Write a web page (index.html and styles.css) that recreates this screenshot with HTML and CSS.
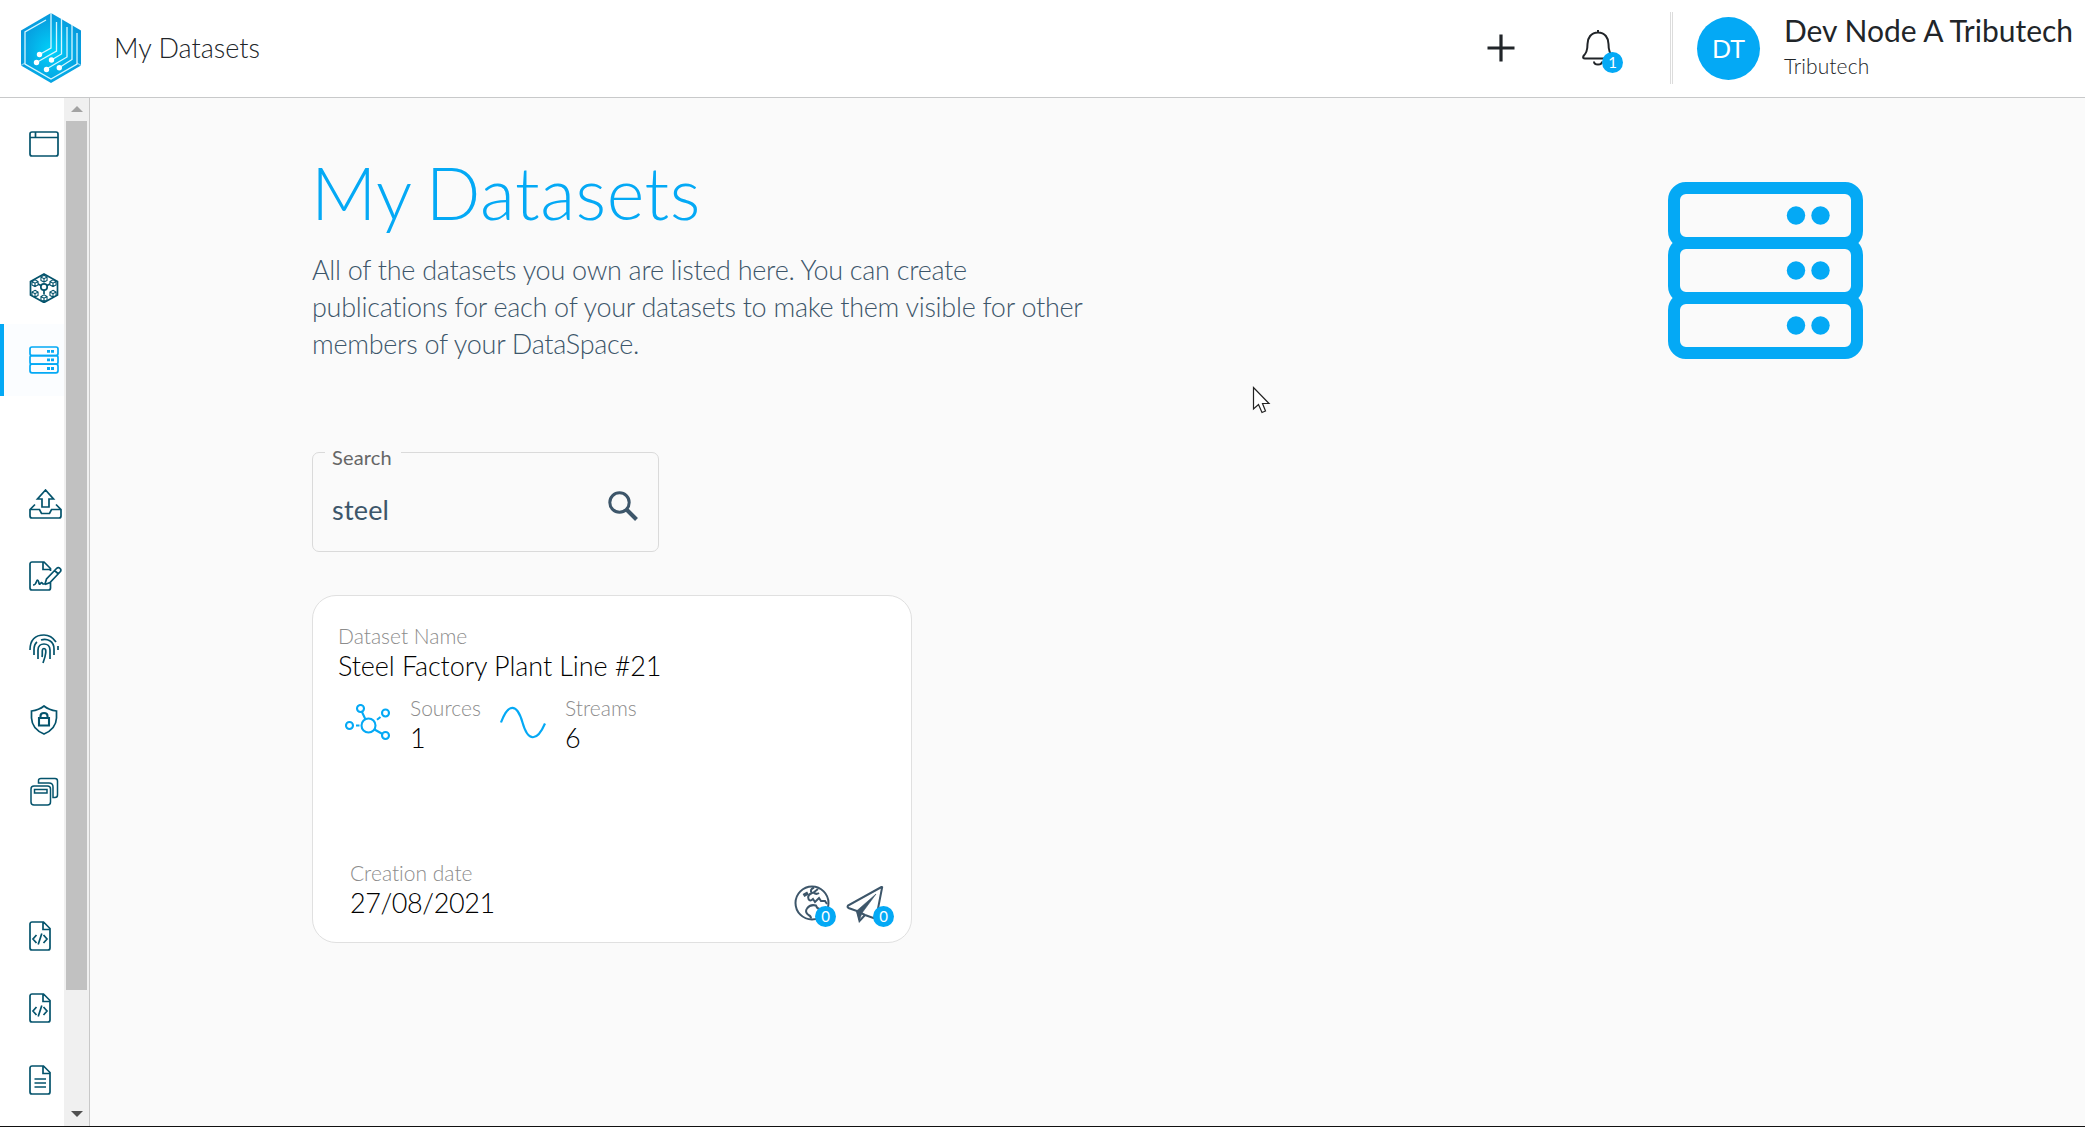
FILE: index.html
```html
<!DOCTYPE html>
<html lang="en">
<head>
<meta charset="utf-8">
<title>My Datasets</title>
<link rel="stylesheet" href="styles.css">
</head>
<body>
<svg class="defs" width="0" height="0">
  <defs>
    <radialGradient id="logoFill" cx="50%" cy="55%" r="58%">
      <stop offset="0" stop-color="#00d2fa"/><stop offset="1" stop-color="#0894da"/>
    </radialGradient>
    <symbol id="servers" viewBox="0 0 195 177">
      <g fill="none" stroke="currentColor" stroke-width="12"><rect x="6" y="6" width="183" height="55" rx="12"/><rect x="6" y="61" width="183" height="55" rx="12"/><rect x="6" y="116" width="183" height="55" rx="12"/></g>
      <g fill="currentColor"><circle cx="128" cy="33.500" r="9.200"/><circle cx="152.500" cy="33.500" r="9.200"/><circle cx="128" cy="88.500" r="9.200"/><circle cx="152.500" cy="88.500" r="9.200"/><circle cx="128" cy="143.500" r="9.200"/><circle cx="152.500" cy="143.500" r="9.200"/></g>
    </symbol>
    <symbol id="cube" viewBox="-5 -5 10 10"><path d="M0-3.600L3.400-1.700V2.200L0 4L-3.400 2.200V-1.700ZM-3.400-1.700L0 .2L3.400-1.700M0 .2V4" fill="#fff" stroke="currentColor" stroke-width="1.200"/></symbol>
    <symbol id="codefile" viewBox="0 0 22 30"><path d="M3 1H14.500L21 7.500V27a2 2 0 0 1-2 2H3a2 2 0 0 1-2-2V3a2 2 0 0 1 2-2ZM14 1V8.500H21M7.500 14L4 18L7.500 22M14.500 14L18 18L14.500 22M12.800 12.500L9.200 23.500" fill="none" stroke="currentColor" stroke-width="1.700"/></symbol>
  </defs>
</svg>
<header class="topbar">
  <svg class="logo" width="60" height="70" viewBox="0 0 60 70">
    <path d="M30 0L60 17.500V52.500L30 70L0 52.500V17.500Z" fill="url(#logoFill)"/>
    <g fill="none" stroke="#d5f6ff" stroke-width="1.300">
      <path d="M25 7L4 19V51L30 66L56 51V20"/>
      <path d="M0 52.500L4 50M60 52.500L56 50" stroke-opacity=".6"/>
      <path d="M30 0V35L18.500 41.500M35.500 9V38L15.500 49.500M40.500 6V41L30.500 47M46 14V44L25.500 56M51 12V46.500L38.500 54.500"/>
    </g>
    <g fill="#fff"><circle cx="18.500" cy="41.500" r="2.700"/><circle cx="15.500" cy="49.500" r="2.700"/><circle cx="30.500" cy="47" r="2.700"/><circle cx="25.500" cy="56.500" r="2.700"/><circle cx="38.300" cy="54.700" r="2.700"/></g>
  </svg>
  <span class="page-name">My Datasets</span>
  <svg class="plus" width="28" height="28" viewBox="0 0 28 28"><path d="M14 .5V27.500M.5 14H27.500" stroke="#212529" stroke-width="3.200"/></svg>
  <div class="bell">
    <svg width="32" height="38" viewBox="0 0 32 38"><path d="M16 1V4M16 3.500C9 3.500 5.500 9 5.500 15C5.500 22 4 24 1.500 27Q.3 29.500 3 29.500H29Q31.700 29.500 30.500 27C28 24 26.500 22 26.500 15C26.500 9 23 3.500 16 3.500ZM12 32.500Q12 35.500 16 35.500Q20 35.500 20 32.500" fill="none" stroke="#212529" stroke-width="2"/></svg>
    <span class="badge">1</span>
  </div>
  <div class="user">
    <div class="avatar">DT</div>
    <div class="who"><div class="user-name">Dev Node A Tributech</div><div class="org">Tributech</div></div>
  </div>
</header>
<div class="body">
  <nav class="rail">
    <div class="items">
      <a class="item"><svg width="30" height="26" viewBox="0 0 30 26"><rect x="1" y="1" width="28" height="24" rx="2" /><path d="M1 6.500H29M6.500 1V6.500"/></svg></a>
      <div class="item"></div>
      <a class="item"><svg width="30" height="30" viewBox="0 0 30 30"><path d="M15 1L28.500 8.500V22L15 29.500L1.500 22V8.500ZM15 17V21M12 12.500L8 10.500M18 12.500L22 10.500"/><circle cx="15" cy="14" r="3.200"/><use href="#cube" x="10.500" y="1" width="9" height="9"/><use href="#cube" x="1.500" y="5.500" width="9" height="9"/><use href="#cube" x="19.500" y="5.500" width="9" height="9"/><use href="#cube" x="1.500" y="16" width="9" height="9"/><use href="#cube" x="19.500" y="16" width="9" height="9"/><use href="#cube" x="10.500" y="20.500" width="9" height="9"/></svg></a>
      <a class="item active"><svg class="rack" width="30" height="28" viewBox="0 0 30 28"><rect x="1" y="1" width="28" height="8.600" rx="2"/><rect x="1" y="9.600" width="28" height="8.600" rx="2"/><rect x="1" y="18.200" width="28" height="8.600" rx="2"/><path d="M18 5.300H21M22 5.300H25M18 13.900H21M22 13.900H25M18 22.500H21M22 22.500H25" stroke-width="2.800"/></svg></a>
      <div class="item"></div>
      <a class="item"><svg width="33" height="30" viewBox="0 0 33 30"><path d="M6 15.500L1 20.500V27a2 2 0 0 0 2 2H30a2 2 0 0 0 2-2V20.500L27 15.500M1 20.500H10.500L12.500 24.500H20.500L22.500 20.500H32M16.500 1L8.500 10H13V18H20V10H24.500Z"/></svg></a>
      <a class="item"><svg width="33" height="30" viewBox="0 0 33 30"><path d="M21.500 10V7.500L15 1H3a2 2 0 0 0-2 2V27a2 2 0 0 0 2 2H19.500a2 2 0 0 0 2-2V21M14 1V8.500H21.500M4 24C8 24 7 19 8.500 19S9.500 24 11 23S12 20.500 14 23H16L17.500 18L27.500 7.500Q29.500 5.500 31.500 8Q32.500 9.500 31 11L21 21.500L16 23.500M25.500 9.500L29.500 13"/></svg></a>
      <a class="item"><svg width="30" height="31" viewBox="0 0 30 31"><path d="M1 17C1 7 6 2 15 2C20 2 24 4.500 27 9M29 13V17M5 22V17C5 12 6 10.500 8 9M12 7C18 5 25 8 25 16V22M9 26V17C9 9 21 9 21 17V26M13 24C14 21 12 15.500 15 15.500S17 22 14 30"/></svg></a>
      <a class="item"><svg class="shield" width="28" height="30" viewBox="0 0 28 30"><path d="M14 1Q19 5 26.500 6V13Q26 24 14 29Q2 24 1.500 13V6Q9 5 14 1Z"/><path d="M9 13H19V20.500H9ZM10.500 13V11Q10.500 8 14 8T17.500 11V13" stroke-width="2.100"/></svg></a>
      <a class="item"><svg class="stack" width="30" height="30" viewBox="0 0 30 30"><rect x="2" y="9" width="19.500" height="19" rx="3"/><path d="M5.500 12.500H18V16H5.500ZM9.500 6V3.500Q9.500 1.500 12 1.500H26Q28.500 1.500 28.500 4V18Q28.500 20.500 26 20.500H24V10Q24 6 20 6Z"/></svg></a>
      <div class="item"></div>
      <a class="item"><svg width="22" height="30"><use href="#codefile"/></svg></a>
      <a class="item"><svg width="22" height="30"><use href="#codefile"/></svg></a>
      <a class="item"><svg width="22" height="30" viewBox="0 0 22 30"><path d="M3 1H14.500L21 7.500V27a2 2 0 0 1-2 2H3a2 2 0 0 1-2-2V3a2 2 0 0 1 2-2ZM14 1V8.500H21M5.500 14H17M5.500 18H17M5.500 22H17"/></svg></a>
    </div>
    <div class="scrollbar">
      <svg width="12" height="6" viewBox="0 0 12 6"><path d="M6 0L12 6H0Z" fill="#a3a3a3"/></svg>
      <div class="thumb"></div>
      <svg class="down" width="12" height="6" viewBox="0 0 12 6"><path d="M0 0H12L6 6Z" fill="#505050"/></svg>
    </div>
  </nav>
  <main class="content">
    <section class="intro">
      <div>
        <h1>My Datasets</h1>
        <p>All of the datasets you own are listed here. You can create publications for each of your datasets to make them visible for other members of your DataSpace.</p>
      </div>
      <svg class="hero" width="195" height="177"><use href="#servers"/></svg>
    </section>
    <fieldset class="search">
      <legend>Search</legend>
      <span class="query">steel</span>
      <svg width="31" height="31" viewBox="0 0 31 31" fill="none" stroke="#3d566a"><circle cx="11.500" cy="11.500" r="9.700" stroke-width="3"/><path d="M18.500 18.500L28.500 28.500" stroke-width="4"/></svg>
    </fieldset>
    <article class="card">
      <div class="label">Dataset Name</div>
      <div class="value">Steel Factory Plant Line #21</div>
      <div class="stats">
        <svg width="46" height="37" viewBox="0 0 46 37" fill="none" stroke="#04a9f5" stroke-width="2.100"><circle cx="23.500" cy="21.500" r="7"/><circle cx="15.500" cy="4.500" r="3.500"/><circle cx="40.500" cy="9" r="3.500"/><circle cx="4.500" cy="21.500" r="3.500"/><circle cx="40.500" cy="31.500" r="3.500"/><path d="M17 8L20.500 15.500M29.500 25.500L37.500 30M11 21.500H14.500M32 15.800L35.500 13"/></svg>
        <div class="stat"><div class="label">Sources</div><div class="value">1</div></div>
        <svg class="wave" width="46" height="34" viewBox="0 0 46 34"><path d="M1 16.500C8-3 17-3 22.500 16.500S37 36 45 17.500" fill="none" stroke="#04a9f5" stroke-width="2.200"/></svg>
        <div class="stat"><div class="label">Streams</div><div class="value">6</div></div>
      </div>
      <footer>
        <div class="created"><div class="label">Creation date</div><div class="value date">27/08/2021</div></div>
        <div class="action globe">
          <svg width="36" height="36" viewBox="0 0 36 36"><circle cx="18" cy="18" r="16.500"/><path d="M20 2.500Q15 5 18 8Q13 10 14.500 14Q16 17 19 14L21 17L25 13L27 16H31L33 19M24 4L19.500 7.500Q22 10 25 8M17 33.500Q17 31 14.500 30Q10.500 27 13 23.500Q16 19 22 20.500Q23 24 26 24"/><path d="M9.500 10.500L14 8" stroke-width="3.500"/></svg>
          <span class="badge">0</span>
        </div>
        <div class="action plane">
          <svg width="38" height="38" viewBox="0 0 38 38"><path d="M35.500 2L2 20.500Q1 22 2.500 23L11 26L13.500 36L19 30L30 34L36 3Q36.500 1.500 35.500 2ZM15 28L19 30"/><path d="M10.500 26L30 9L16 28L13.500 35Z" fill="#3d566a" stroke-width=".6"/></svg>
          <span class="badge">0</span>
        </div>
      </footer>
    </article>
  </main>
</div>
<svg class="pointer" width="20" height="30" viewBox="0 0 20 30"><path d="M1.500 1.500V23L6.500 18.500L10 26.500L13.500 25L10.500 17.500H17Z" fill="#fff" stroke="#222" stroke-width="1.200"/></svg>
</body>
</html>
```
FILE: styles.css
```css
* { box-sizing: border-box; }
body { margin: 0; width: 2085px; height: 1127px; overflow: hidden; display: flex; flex-direction: column; background: #fafafa; font-family: Lato, sans-serif; font-variant-ligatures: none; color: #212529; border-bottom: 1px solid #111; position: relative; }
svg { display: block; flex: none; }
.defs { position: absolute; }
.topbar { height: 98px; flex: none; display: flex; align-items: center; background: #fff; border-bottom: 1px solid #c8c9ca; padding: 0 0 1px 21px; }
.page-name { font-size: 27px; font-weight: 300; margin: 0 0 2px 33px; white-space: nowrap; }
.plus { margin-left: auto; }
.bell { position: relative; margin-left: 67px; width: 88px; }
.badge { position: absolute; width: 21px; height: 21px; border-radius: 50%; background: #04a9f5; color: #fff; font-size: 15px; line-height: 21px; text-align: center; }
.bell .badge { left: 20px; top: 23px; }
.user { display: flex; align-items: center; width: 415px; height: 72px; border-left: 3px double #dcdcdc; padding-left: 24px; }
.avatar { width: 63px; height: 63px; border-radius: 50%; background: #04a9f5; color: #fff; font-size: 25px; line-height: 63px; text-align: center; flex: none; }
.who { padding-left: 24px; white-space: nowrap; }
.user-name { font-size: 30px; line-height: 34px; }
.org { font-size: 21px; line-height: 37px; font-weight: 300; letter-spacing: .1px; }
.body { flex: 1; min-height: 0; display: flex; }
.rail { width: 90px; flex: none; display: flex; background: #fff; border-right: 1px solid #c8c8c8; }
.items { width: 64px; padding-top: 10px; overflow: hidden; }
.item { height: 72px; padding-left: 29px; display: flex; align-items: center; color: #04536c; fill: none; stroke: currentColor; stroke-width: 1.7; }
.active { color: #04a9f5; background: #fbfdff; border-left: 4px solid #04a9f5; padding-left: 25px; }
.shield { margin-left: 1px; }
.stack { stroke-width: 1.5; }
.scrollbar { width: 25px; background: #f0f0f0; display: flex; flex-direction: column; align-items: center; padding: 8px 0 9px; }
.thumb { width: 21px; height: 869px; background: #c1c1c1; margin: 9px 2px 0; align-self: flex-start; }
.down { margin-top: auto; }
.content { flex: 1; padding: 54px 222px 0 222px; }
.intro { display: flex; justify-content: space-between; }
h1 { margin: 0 0 0 -1px; font-size: 72px; line-height: 80px; font-weight: 300; letter-spacing: .5px; word-spacing: -5px; color: #04a9f5; }
p { margin: 19px 0 0; width: 790px; font-size: 27px; line-height: 37px; font-weight: 300; letter-spacing: -.28px; color: #3d566a; }
.hero { color: #04a9f5; margin-top: 30px; }
.search { width: 347px; height: 115px; margin: 75px 0 0; padding: 0 20px 0 12px; border: 1px solid #dadada; border-radius: 7px; display: flex; justify-content: space-between; align-items: center; color: #3d566a; }
.search legend { font-size: 20px; line-height: 20px; padding: 10px 9px 0 7px; color: #666; letter-spacing: .15px; }
.search svg { margin: 0 -1px 6px 0; }
.query { font-size: 27px; letter-spacing: .2px; padding: 0 0 0 7px; }
.card { width: 600px; height: 348px; margin-top: 43px; border: 1px solid #e0e0e0; border-radius: 24px; background: #fff; padding: 26px 17px 17px 25px; display: flex; flex-direction: column; }
.label { font-size: 21px; line-height: 28px; font-weight: 300; color: #8c8c8c; white-space: nowrap; }
.value { font-size: 27px; line-height: 32px; font-weight: 300; letter-spacing: -.1px; color: #000; white-space: nowrap; }
.date { letter-spacing: -.4px; }
.stats { display: flex; margin-top: 12px; padding-left: 7px; }
.stats > svg { margin-top: 10px; }
.stat { width: 109px; padding-left: 19px; }
.stats .wave { margin-top: 12px; }
footer { margin-top: auto; display: flex; padding-left: 12px; }
.created { flex: 1; margin-bottom: 6px; }
.action { position: relative; fill: none; stroke: #3d566a; stroke-width: 2; margin-top: 26px; }
.globe { width: 52px; }
.plane { width: 48px; }
.action .badge { left: 21px; top: 21px; }
.plane .badge { left: 27px; }
.pointer { position: absolute; left: 1252px; top: 386px; }
```
